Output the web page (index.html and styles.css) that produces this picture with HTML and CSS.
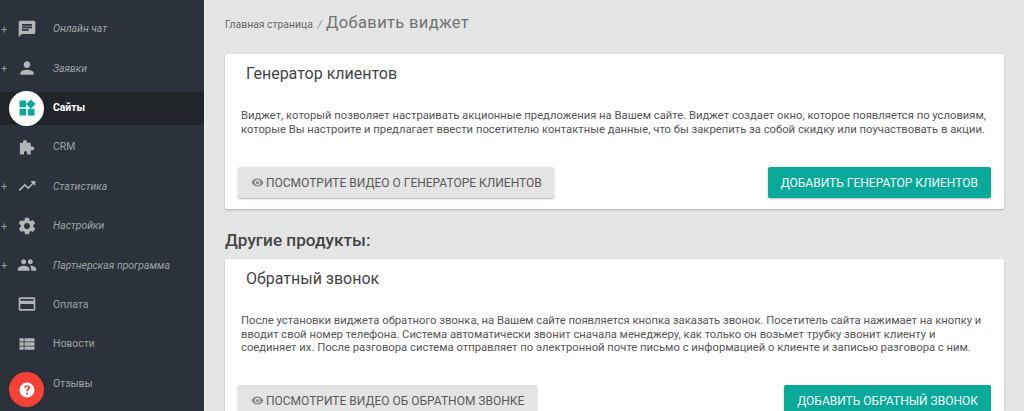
FILE: index.html
```html
<!DOCTYPE html>
<html lang="ru">
<head>
<meta charset="utf-8">
<title>Добавить виджет</title>
<link rel="stylesheet" href="styles.css">
</head>
<body>
<div class="app">
  <aside class="sidebar">
    <ul class="menu">
      <li class="item sub"><span class="plus">+</span><span class="ic"><svg viewBox="0 0 24 24"><path d="M20 2H4c-1.100 0-2 .9-2 2v18l4-4h14c1.100 0 2-.9 2-2V4c0-1.100-.9-2-2-2zM6 9h12v2H6V9zm8 5H6v-2h8v2zm4-6H6V6h12v2z"/></svg></span><span class="label">Онлайн чат</span></li>
      <li class="item sub"><span class="plus">+</span><span class="ic"><svg viewBox="0 0 24 24"><path d="M12 12c2.200 0 4-1.800 4-4s-1.800-4-4-4-4 1.800-4 4 1.800 4 4 4zm0 2c-2.700 0-8 1.300-8 4v2h16v-2c0-2.700-5.300-4-8-4z"/></svg></span><span class="label">Заявки</span></li>
      <li class="item active"><span class="ic"><svg viewBox="0 0 24 24"><path d="M13 13v8h8v-8h-8zM3 21h8v-8H3v8zM3 3v8h8V3H3zm13.660-1.310L11 7.340 16.660 13l5.660-5.660-5.660-5.650z"/></svg></span><span class="label">Сайты</span></li>
      <li class="item"><span class="ic"><svg viewBox="0 0 24 24"><path d="M3.500 7H7.200V6a2.400 2.400 0 0 1 4.800 0V7H16.500v4.500h2a2.200 2.200 0 0 1 0 4.400h-2V21H12v-2.500a1.800 1.800 0 0 0-3.600 0V21H3.500z"/></svg></span><span class="label">CRM</span></li>
      <li class="item sub"><span class="plus">+</span><span class="ic"><svg viewBox="0 0 24 24"><path d="M16 6l2.300 2.300-4.900 4.900-4-4L2 16.600 3.400 18l6-6 4 4 6.300-6.300L22 12V6z"/></svg></span><span class="label">Статистика</span></li>
      <li class="item sub"><span class="plus">+</span><span class="ic"><svg viewBox="0 0 24 24"><path d="M19.400 13c0-.3.1-.6.1-1s0-.7-.1-1l2.100-1.600c.2-.2.2-.4.1-.6l-2-3.500c-.1-.2-.4-.3-.6-.2l-2.500 1c-.5-.4-1.100-.7-1.700-1l-.4-2.600c0-.3-.2-.5-.5-.5h-4c-.3 0-.5.2-.5.400l-.4 2.700c-.6.200-1.100.6-1.700 1l-2.500-1c-.2-.1-.5 0-.6.200l-2 3.500c-.1.200-.1.500.1.600L4.600 11c0 .3-.1.700-.1 1s0 .7.1 1l-2.100 1.600c-.2.200-.2.400-.1.600l2 3.500c.1.200.4.300.6.200l2.500-1c.5.400 1.100.7 1.700 1l.4 2.600c0 .3.200.5.500.5h4c.3 0 .5-.2.500-.4l.4-2.700c.6-.2 1.100-.6 1.700-1l2.500 1c.2.100.5 0 .6-.2l2-3.500c.1-.2.100-.5-.1-.6zM12 15.500a3.500 3.500 0 1 1 0-7 3.500 3.500 0 0 1 0 7z"/></svg></span><span class="label">Настройки</span></li>
      <li class="item sub"><span class="plus">+</span><span class="ic"><svg viewBox="0 0 24 24"><path d="M16 11c1.700 0 3-1.300 3-3s-1.300-3-3-3-3 1.300-3 3 1.300 3 3 3zm-8 0c1.700 0 3-1.300 3-3S9.700 5 8 5 5 6.300 5 8s1.300 3 3 3zm0 2c-2.300 0-7 1.200-7 3.500V19h14v-2.500C15 14.200 10.300 13 8 13zm8 0h-1c1.200.8 2 2 2 3.500V19h6v-2.500c0-2.300-4.700-3.500-7-3.500z"/></svg></span><span class="label">Партнерская программа</span></li>
      <li class="item plain"><span class="ic"><svg viewBox="0 0 24 24"><path d="M20 4H4c-1.100 0-2 .9-2 2v12c0 1.100.9 2 2 2h16c1.100 0 2-.9 2-2V6c0-1.100-.9-2-2-2zm0 14H4v-6h16v6zm0-10H4V6h16v2z"/></svg></span><span class="label">Оплата</span></li>
      <li class="item plain"><span class="ic"><svg viewBox="0 0 24 24"><path d="M3 5h5v4H3zM9 5h12v4H9zM3 10h5v4H3zM9 10h12v4H9zM3 15h5v4H3zM9 15h12v4H9z"/></svg></span><span class="label">Новости</span></li>
      <li class="item plain"><span class="ic"></span><span class="label">Отзывы</span></li>
    </ul>
    <button class="help" type="button"><svg viewBox="0 0 24 24"><path d="M12 2a10 10 0 1 0 0 20 10 10 0 0 0 0-20zm1.300 16h-2.600v-2.500h2.600V18zm2.500-7.700c-.4.600-1 1-1.500 1.400-.7.500-1 .9-1 1.800h-2.500c0-1.500.5-2.300 1.400-3 .6-.4 1.400-.8 1.400-1.700 0-.8-.6-1.300-1.400-1.300-.9 0-1.500.6-1.600 1.500L8 8.500C8.300 6.600 9.800 5.500 11.900 5.500c2.300 0 4.500 1.200 4.500 3.200 0 .6-.2 1.100-.6 1.600z"/></svg></button>
  </aside>
  <main class="main">
    <div class="crumbs"><span class="crumb">Главная страница</span><span class="sep">/</span><h1 class="page-title">Добавить виджет</h1></div>
    <section class="card first">
      <h2 class="card-title">Генератор клиентов</h2>
      <p class="card-text">Виджет, который позволяет настраивать акционные предложения на Вашем сайте. Виджет создает окно, которое появляется по условиям, которые Вы настроите и предлагает ввести посетителю контактные данные, что бы закрепить за собой скидку или поучаствовать в акции.</p>
      <div class="actions">
        <button class="btn grey" type="button"><svg class="eye" viewBox="0 0 24 24"><path d="M12 4.500C7 4.500 2.700 7.600 1 12c1.700 4.400 6 7.500 11 7.500s9.300-3.100 11-7.500c-1.700-4.400-6-7.500-11-7.500zM12 17a5 5 0 1 1 0-10 5 5 0 0 1 0 10zm0-8a3 3 0 1 0 0 6 3 3 0 0 0 0-6z"/></svg> Посмотрите видео о генераторе клиентов</button>
        <button class="btn teal" type="button">Добавить генератор клиентов</button>
      </div>
    </section>
    <h3 class="section-title">Другие продукты:</h3>
    <section class="card">
      <h2 class="card-title">Обратный звонок</h2>
      <p class="card-text">После установки виджета обратного звонка, на Вашем сайте появляется кнопка заказать звонок. Посетитель сайта нажимает на кнопку и вводит свой номер телефона. Система автоматически звонит сначала менеджеру, как только он возьмет трубку звонит клиенту и соединяет их. После разговора система отправляет по электронной почте письмо с информацией о клиенте и записью разговора с ним.</p>
      <div class="actions">
        <button class="btn grey" type="button"><svg class="eye" viewBox="0 0 24 24"><path d="M12 4.500C7 4.500 2.700 7.600 1 12c1.700 4.400 6 7.500 11 7.500s9.300-3.100 11-7.500c-1.700-4.400-6-7.500-11-7.500zM12 17a5 5 0 1 1 0-10 5 5 0 0 1 0 10zm0-8a3 3 0 1 0 0 6 3 3 0 0 0 0-6z"/></svg> Посмотрите видео об обратном звонке</button>
        <button class="btn teal" type="button">Добавить обратный звонок</button>
      </div>
    </section>
  </main>
</div>
</body>
</html>
```

FILE: styles.css
```css
* { box-sizing: border-box; }
html, body { margin: 0; height: 411px; overflow: hidden; }
body { font-family: Roboto, "Liberation Sans", sans-serif; background: #e4e6e5; color: #444; }
.app { display: flex; height: 411px; overflow: hidden; }

.sidebar { position: relative; width: 204px; flex: none; background: #2b323b; overflow: hidden; }
.menu { list-style: none; margin: 9px 0 0; padding: 0; }
.item { position: relative; display: flex; align-items: center; height: 39.400px; padding-left: 17px; color: #a0a3a6; font-size: 10.400px; }
.item .ic { width: 20px; height: 20px; flex: none; display: flex; fill: #b3b4b6; }
.item .ic svg { width: 20px; height: 20px; }
.item .label { margin-left: 16px; white-space: nowrap; }
.sub .label { font-style: italic; }
.plus { position: absolute; left: 1px; top: 50%; transform: translateY(-50%); font-size: 11px; color: #9a9da0; font-style: normal; }
.active { background: #212529; color: #fff; font-weight: 700; height: 33px; margin: 4px 0 2.400px; }
.active .ic { fill: #0ba99a; position: relative; z-index: 1; }
.active::before { content: ""; position: absolute; left: 9px; top: -1px; width: 35px; height: 35px; border-radius: 50%; background: #fff; }
.active .label { position: relative; margin-top: -2px; }
.help { position: absolute; left: 9px; top: 372px; width: 35px; height: 35px; padding: 8.500px; border: 0; border-radius: 50%; background: #f44336; fill: #fff; display: flex; }
.help svg { width: 18px; height: 18px; }

.main { flex: 1; min-width: 0; border-left: 1px solid #f0f0f0; padding: 0 20px 0 20px; }
.crumbs { display: flex; align-items: baseline; height: 54px; padding-top: 13px; white-space: nowrap; }
.crumb { font-size: 10.400px; color: #666; }
.sep { font-size: 10.500px; color: #888; margin: 0 4px 0 5px; font-style: italic; }
.page-title { margin: 0; font-size: 16.500px; font-weight: 400; color: #727272; letter-spacing: .35px; }

.card { background: #fff; border-radius: 2px; box-shadow: 0 1px 2px rgba(0,0,0,.25); padding: 0 13px 0 13px; }
.first { height: 155px; }
.card-title { margin: 0; padding: 9px 0 0 8px; font-size: 16px; line-height: 22px; font-weight: 400; color: #444; }
.card-text { margin: 24px 0 0 3px; font-size: 11.250px; line-height: 13.500px; color: #555; }
.first .card-text { height: 58px; }
.card:not(.first) .card-text { height: 71px; }
.actions { display: flex; justify-content: space-between; }
.btn { height: 31px; padding: 0 13px; border: 0; border-radius: 2px; font: 400 12px Roboto, "Liberation Sans", sans-serif; text-transform: uppercase; white-space: nowrap; box-shadow: 0 1px 2px rgba(0,0,0,.3); }
.grey { background: #e4e4e4; color: #5a5a5a; padding-right: 12.500px; }
.teal { background: #0ba99a; color: #f2fbfa; }
.eye { width: 13px; height: 13px; vertical-align: -2px; fill: #888; margin-right: -1px; }
.section-title { margin: 0; height: 50px; padding-top: 21px; font-size: 17.200px; line-height: 20px; font-weight: 500; color: #444; }
```
